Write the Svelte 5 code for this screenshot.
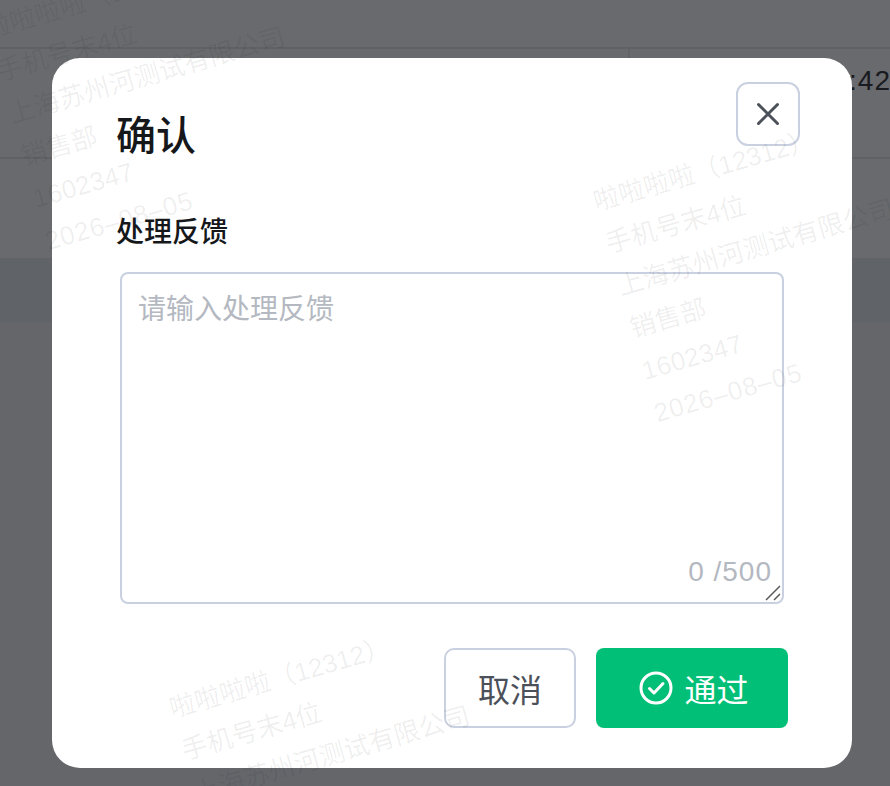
<script>
  const marks = ['wm-a', 'wm-b', 'wm-c'];
  const lines = ['啦啦啦啦（12312）', '手机号末4位', '上海苏州河测试有限公司', '销售部', '1602347', '2026–08–05'];
</script>

<div class="page">
  <div class="table">
    <div class="row row-head"></div>
    <div class="row row-body">
      <span class="cell-line"></span>
      <span class="cell-time">11:42</span>
    </div>
    <div class="row row-blank"></div>
    <div class="row row-band"></div>
  </div>
  <div class="mask"></div>

  <div class="layer">
    <section class="dialog">
      <header class="head">
        <h2>确认</h2>
        <button class="close" aria-label="关闭">
          <svg width="24" height="24" viewBox="0 0 24 24"><path d="M2.5 2.5 21.5 21.5M21.5 2.5 2.5 21.5" /></svg>
        </button>
      </header>
      <label class="label" for="fb">处理反馈</label>
      <div class="field">
        <textarea id="fb" placeholder="请输入处理反馈"></textarea>
        <span class="count">0 /500</span>
        <svg class="grip" width="16" height="16" viewBox="0 0 16 16"><path d="M1 15 15 1M9 15 15 9" /></svg>
      </div>
      <footer class="foot">
        <button class="btn cancel">取消</button>
        <button class="btn ok">
          <svg width="34" height="34" viewBox="0 0 34 34">
            <circle cx="17" cy="17" r="15" />
            <path d="M10.5 17.5 15 22 24 12.5" />
          </svg>
          <span>通过</span>
        </button>
      </footer>
    </section>
  </div>

  {#each marks as m}
    <div class="wm {m}">
      {#each lines as l}<div>{l}</div>{/each}
    </div>
  {/each}
</div>

<style>
  :global(body) {
    margin: 0;
    font-family: "Liberation Sans", "Noto Sans CJK SC", sans-serif;
  }
  .page {
    position: relative;
    width: 890px;
    height: 786px;
    overflow: hidden;
    background: #f6f6f7;
  }
  .table {
    position: absolute;
    inset: 0;
    display: flex;
    flex-direction: column;
  }
  .row {
    box-sizing: border-box;
    flex: none;
  }
  .row-head {
    height: 49px;
    background: #fff;
    border-bottom: 2px solid #e6e8ec;
  }
  .row-body {
    height: 110px;
    border-bottom: 2px solid #e6e8ec;
    display: flex;
    justify-content: space-between;
    align-items: flex-start;
    background: #fff;
    padding-left: 628px;
  }
  .cell-line {
    width: 2px;
    height: 108px;
    background: #eceef1;
  }
  .cell-time {
    font-size: 28px;
    line-height: 40px;
    margin-top: 12px;
    letter-spacing: 1px;
    color: #3e4046;
    margin-right: -1px;
    white-space: nowrap;
  }
  .row-blank {
    height: 99px;
    background: #fff;
  }
  .row-band {
    height: 64px;
    background: #eaeef1;
  }
  .mask {
    position: absolute;
    inset: 0;
    background: rgba(0, 2, 6, 0.59);
  }
  .layer {
    position: absolute;
    inset: 0;
    padding: 58px 0 0 52px;
    box-sizing: border-box;
  }
  .dialog {
    box-sizing: border-box;
    width: 800px;
    height: 710px;
    background: #fff;
    border-radius: 28px;
    padding: 24px 52px 40px 65px;
    display: flex;
    flex-direction: column;
  }
  .head {
    display: flex;
    justify-content: space-between;
    align-items: flex-start;
    height: 64px;
  }
  h2 {
    margin: 26px 0 0 -1px;
    font-size: 40px;
    line-height: 56px;
    font-weight: 500;
    color: #15171a;
  }
  .close {
    box-sizing: border-box;
    width: 64px;
    height: 64px;
    padding: 0;
    background: #fff;
    border: 2px solid #c9d0e0;
    border-radius: 12px;
    display: flex;
    align-items: center;
    justify-content: center;
  }
  .close path {
    fill: none;
    stroke: #4b5059;
    stroke-width: 3;
    stroke-linecap: round;
  }
  .label {
    margin: 67px 0 0 -1px;
    font-size: 28px;
    line-height: 40px;
    font-weight: 500;
    color: #15171a;
  }
  .field {
    position: relative;
    margin: 19px 16px 0 3px;
    height: 332px;
    flex: none;
  }
  textarea {
    display: block;
    box-sizing: border-box;
    width: 100%;
    height: 100%;
    margin: 0;
    padding: 16px 16px;
    border: 2px solid #c9d0e0;
    border-radius: 8px;
    outline: none;
    background: transparent;
    font-family: "Liberation Sans", "Noto Sans CJK SC", sans-serif;
    font-size: 28px;
    line-height: 40px;
    resize: none;
  }
  textarea::placeholder {
    color: #b4b8c1;
    opacity: 1;
  }
  .count {
    position: absolute;
    right: 12px;
    bottom: 14px;
    font-size: 28px;
    line-height: 36px;
    letter-spacing: 1px;
    color: #b4b8c1;
  }
  .grip {
    position: absolute;
    right: 3px;
    bottom: 3px;
  }
  .grip path {
    fill: none;
    stroke: #5a5a5a;
    stroke-width: 1.5;
  }
  .foot {
    margin: 44px 12px 0 0;
    display: flex;
    justify-content: flex-end;
    gap: 20px;
  }
  .btn {
    box-sizing: border-box;
    height: 80px;
    padding: 0;
    font-family: inherit;
    font-size: 32px;
    display: flex;
    align-items: center;
    justify-content: center;
  }
  .cancel {
    width: 132px;
    background: #fff;
    color: #4b5059;
    border: 2px solid #c9d0e0;
    border-radius: 10px;
  }
  .ok {
    width: 192px;
    gap: 11px;
    padding-left: 4px;
    background: #02bf77;
    color: #fff;
    border: none;
    border-radius: 8px;
  }
  .ok svg {
    fill: none;
    stroke: #fff;
    stroke-width: 3;
    stroke-linecap: round;
    stroke-linejoin: round;
  }
  .wm {
    position: absolute;
    transform: rotate(-16deg);
    transform-origin: 0 0;
    white-space: nowrap;
    font-size: 26px;
    line-height: 44px;
    color: rgba(0, 10, 30, 0.07);
    pointer-events: none;
  }
  .wm div:nth-child(5) { letter-spacing: 0.3px; }
  .wm div:nth-child(6) { letter-spacing: 0.8px; }
  .wm-a { left: -21px; top: 9px; }
  .wm-b { left: 588px; top: 181px; }
  .wm-c { left: 164px; top: 688px; }
</style>
